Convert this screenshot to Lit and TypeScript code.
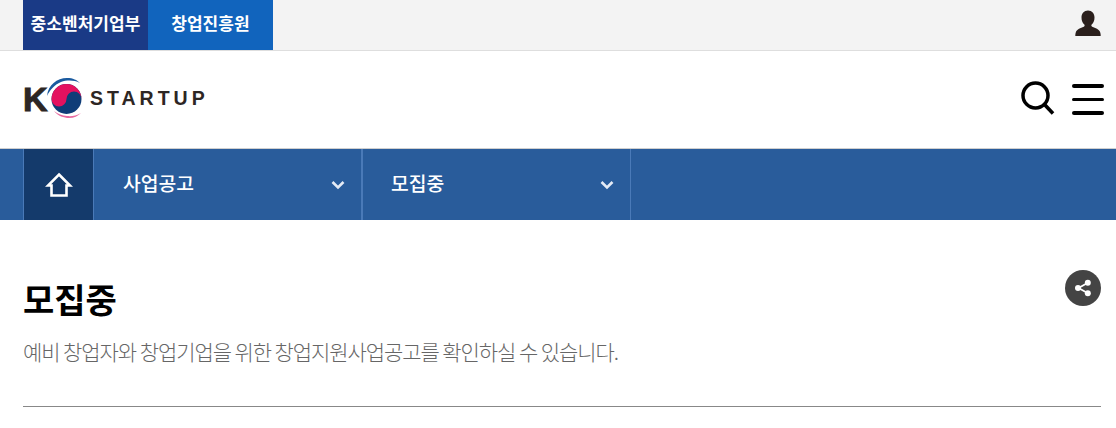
import { LitElement, html, css } from 'lit';
import { customElement } from 'lit/decorators.js';

const chevron = html`<svg class="chevron" width="14" height="10" viewBox="0 0 14 10"><path d="M1.5 2 L7 7.5 L12.5 2" fill="none" stroke="#e4ebf5" stroke-width="2.6"/></svg>`;

@customElement('app-root')
export class AppRoot extends LitElement {
  render() {
    return html`
      <div class="topbar">
        <a class="org org-mss">중소벤처기업부</a>
        <a class="org org-kised">창업진흥원</a>
        <svg class="user" width="26" height="27" viewBox="0 0 26 27">
          <path fill="#2a1f1c" d="M13 .5c4 0 6.500 3 6.500 7 0 3-1 5.500-2.800 7-.6.6-.4 1.700.5 2.200 3.300 1.500 6.800 2.400 7.900 5.300.5 1.300.6 2.700.6 4H.3c0-1.300.1-2.700.6-4 1.100-2.900 4.600-3.800 7.900-5.300.9-.5 1.100-1.600.5-2.200-1.800-1.500-2.800-4-2.800-7 0-4 2.500-7 6.500-7z"/>
        </svg>
      </div>
      <header class="masthead">
        <div class="logo">
          <span class="logo-k">K</span>
          <svg class="logo-mark" width="46" height="48" viewBox="0 0 46 48">
            <path fill="#1a5a9f" d="M7 21C8 10 17 3 27 3c6 0 10 2 13 5-6-3-13-3-19-1C14 10 10 15 7 21z"/>
            <circle cx="26.500" cy="24" r="15" fill="#0f3d78"/>
            <path fill="#e4115f" d="M11.500 24a15 15 0 0 1 30 0a7.500 7.500 0 0 0-15 0a7.500 7.500 0 0 1-15 0z"/>
            <path fill="#e86aa0" d="M14 36c4 5 10 7 15 7s9-2 12-5c-5 3-10 3.500-14 3-5-.5-9-2-13-5z"/>
          </svg>
          <span class="logo-word">STARTUP</span>
        </div>
        <div class="tools">
          <svg class="search" width="35" height="35" viewBox="0 0 35 35">
            <circle cx="14.500" cy="14.500" r="12.500" fill="none" stroke="#000" stroke-width="3.500"/>
            <path d="M24 24 L32 32.500" stroke="#000" stroke-width="3.600"/>
          </svg>
          <div class="burger"><i></i><i></i><i></i></div>
        </div>
      </header>
      <nav class="nav">
        <a class="home">
          <svg width="28" height="26" viewBox="0 0 28 26">
            <path d="M14 2.500 L25 13.500 H21.500 V23.500 H6.500 V13.500 H3 Z" fill="none" stroke="#fff" stroke-width="2.600"/>
          </svg>
        </a>
        <a class="crumb"><span>사업공고</span>${chevron}</a>
        <a class="crumb"><span>모집중</span>${chevron}</a>
      </nav>
      <main class="content">
        <div class="heading">
          <div>
            <h1>모집중</h1>
            <p>예비 창업자와 창업기업을 위한 창업지원사업공고를 확인하실 수 있습니다.</p>
          </div>
          <button class="share" aria-label="공유">
            <svg width="20" height="20" viewBox="0 0 20 20">
              <path d="M14.500 5 L5.500 10 L14.500 15" fill="none" stroke="#fff" stroke-width="1.800"/>
              <circle cx="14.800" cy="4.800" r="3" fill="#fff"/>
              <circle cx="5" cy="10" r="3" fill="#fff"/>
              <circle cx="14.800" cy="15.200" r="3" fill="#fff"/>
            </svg>
          </button>
        </div>
      </main>
    `;
  }

  static styles = css`
    :host {
      display: block;
      background: #fff;
      font-family: 'Noto Sans CJK KR', 'Noto Sans', sans-serif;
    }

    .topbar {
      display: flex;
      align-items: stretch;
      height: 50px;
      padding: 0 15px 0 23px;
      background: #f3f3f3;
      border-bottom: 1px solid #dedede;
    }
    .org {
      display: flex;
      align-items: center;
      justify-content: center;
      box-sizing: border-box;
      width: 125px;
      padding-bottom: 5px;
      color: #fff;
      font-size: 17px;
      font-weight: 700;
      letter-spacing: 0.1px;
    }
    .org-mss {
      background: #1a3a86;
    }
    .org-kised {
      background: #1164bd;
    }
    .user {
      margin: 10px 0 0 auto;
    }

    .masthead {
      display: flex;
      align-items: center;
      justify-content: space-between;
      height: 97px;
      padding: 0 12px 0 23px;
      border-bottom: 1px solid #cfcfcf;
    }
    .logo {
      display: flex;
      align-items: center;
      margin-top: -2px;
      font-family: 'Liberation Sans', sans-serif;
      color: #2d2624;
      font-weight: 700;
    }
    .logo-k {
      width: 17px;
      font-size: 34px;
      line-height: 1;
      -webkit-text-stroke: 1px #2d2624;
    }
    .logo-word {
      margin-left: 4px;
      font-size: 19.500px;
      letter-spacing: 4px;
    }
    .tools {
      display: flex;
      align-items: center;
      gap: 16px;
      margin-top: -2px;
    }
    .burger {
      display: flex;
      flex-direction: column;
      gap: 10px;
      margin-top: 2px;
    }
    .burger i {
      display: block;
      width: 32px;
      height: 3.500px;
      border-radius: 2px;
      background: #000;
    }

    .nav {
      display: flex;
      height: 71px;
      padding-left: 23px;
      background: #295c9b;
    }
    .home {
      display: flex;
      align-items: center;
      justify-content: center;
      box-sizing: border-box;
      width: 71px;
      margin-right: -1px;
      background: #143a6b;
      border-left: 1px solid #4a7ab8;
      border-right: 1px solid #4a7ab8;
    }
    .crumb {
      display: flex;
      align-items: center;
      justify-content: space-between;
      box-sizing: border-box;
      width: 269px;
      padding: 0 16.500px 0 30px;
      color: #fff;
      font-size: 19.300px;
      font-weight: 500;
      border-right: 1px solid #4a7ab8;
    }
    .crumb + .crumb {
      padding-left: 28px;
      border-left: 1px solid #4a7ab8;
    }
    .crumb span {
      margin-bottom: 3px;
    }

    .content {
      padding: 0 15px 0 23px;
    }
    .heading {
      display: flex;
      justify-content: space-between;
      align-items: flex-start;
      height: 187px;
      box-sizing: border-box;
      border-bottom: 1px solid #888;
    }
    h1 {
      margin: 54px 0 0;
      font-size: 34px;
      line-height: 50px;
      font-weight: 700;
      color: #000;
    }
    p {
      margin: 12px 0 0;
      font-size: 21px;
      line-height: 30px;
      font-weight: 300;
      letter-spacing: -1.070px;
      color: #666;
    }
    .share {
      display: flex;
      align-items: center;
      justify-content: center;
      width: 36px;
      height: 36px;
      margin-top: 50px;
      padding: 0;
      border: 0;
      border-radius: 50%;
      background: #444;
    }
  `;
}
